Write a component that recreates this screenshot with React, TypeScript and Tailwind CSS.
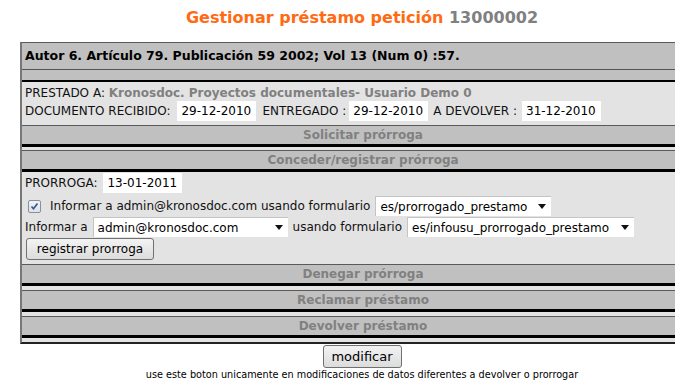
import React from "react";

const font = { fontFamily: '"DejaVu Sans", Verdana, sans-serif' };

function TextInput({ value }: { value: string }) {
  return (
    <div className="w-[79px] h-[20px] bg-white flex items-center pl-[4px] text-[12px] text-black">
      {value}
    </div>
  );
}

function Select({ value, width }: { value: string; width: string }) {
  return (
    <div
      className={`${width} h-[20px] bg-white border-t border-l border-[#c4c4c4] flex items-center justify-between pl-[4px] pr-[5px] text-[12px] text-black`}
    >
      <span>{value}</span>
      <svg width="8" height="5" viewBox="0 0 8 5">
        <path d="M0 0 L8 0 L4 5 Z" fill="#111" />
      </svg>
    </div>
  );
}

function Bar({ title }: { title: string }) {
  return (
    <div className="border-t border-[#5a5a5a] bg-[#c0c0c0] h-[22px] border-b-[3px] border-b-black flex items-center justify-center font-bold text-[12px] text-[#808080]">
      {title}
    </div>
  );
}

export default function App() {
  return (
    <div className="w-[675px] h-[389px] overflow-hidden bg-white" style={font}>
      <div className="w-[724px]">
        <div className="h-[42px] pt-[8px] text-center text-[16px] font-bold leading-[20px]">
          <span className="text-[#ff6a13]">Gestionar préstamo petición </span>
          <span className="text-[#808080]">13000002</span>
        </div>
        <div className="ml-[20px] w-[684px] border-t border-t-[#5a5a5a] border-l-2 border-l-[#777] border-b-2 border-b-[#222] bg-[#e3e3e3] text-[12px] text-[#111]">
          <div className="h-[27px] bg-[#c0c0c0] border-b border-b-[#555] flex items-center pl-[3px] font-bold text-black text-[12.5px]">
            Autor 6. Artículo 79. Publicación 59 2002; Vol 13 (Num 0) :57.
          </div>
          <div className="h-[12px] bg-[#c0c0c0] border-b-2 border-b-black" />
          <div className="pl-[3px] pt-[2px] pb-[4px]">
            <div className="h-[17px] flex items-center">
              <span>PRESTADO A:&nbsp;</span>
              <span className="font-bold text-[#808080]">Kronosdoc. Proyectos documentales- Usuario Demo 0</span>
            </div>
            <div className="h-[20px] flex items-center">
              <span>DOCUMENTO RECIBIDO:</span>
              <div className="ml-[7px]"><TextInput value="29-12-2010" /></div>
              <span className="ml-[6px]">ENTREGADO :</span>
              <div className="ml-[3px]"><TextInput value="29-12-2010" /></div>
              <span className="ml-[5px]">A DEVOLVER :</span>
              <div className="ml-[5px]"><TextInput value="31-12-2010" /></div>
            </div>
          </div>
          <div className="pb-[3px]">
            <Bar title="Solicitar prórroga" />
          </div>
          <Bar title="Conceder/registrar prórroga" />
          <div className="pl-[3px] pt-[1px] pb-[4px]">
            <div className="h-[20px] flex items-center">
              <span>PRORROGA:</span>
              <div className="ml-[6px]"><TextInput value="13-01-2011" /></div>
            </div>
            <div className="h-[20px] mt-[3px] flex items-center">
              <span className="ml-[3px] w-[13px] h-[13px] border border-[#8e8f8f] rounded-[2px] bg-gradient-to-b from-[#f0f4fa] to-[#d9e2ee] flex items-center justify-center">
                <svg width="9" height="9" viewBox="0 0 9 9">
                  <path d="M1.5 4.5 L3.5 6.8 L7.5 1.5" stroke="#3c4f8a" strokeWidth="1.6" fill="none" />
                </svg>
              </span>
              <span className="ml-[9px]">Informar a admin@kronosdoc.com usando formulario</span>
              <div className="ml-[5px]"><Select value="es/prorrogado_prestamo" width="w-[176px]" /></div>
            </div>
            <div className="h-[20px] mt-[1px] flex items-center">
              <span>Informar a</span>
              <div className="ml-[5px]"><Select value="admin@kronosdoc.com" width="w-[195px]" /></div>
              <span className="ml-[5px]">usando formulario</span>
              <div className="ml-[5px]"><Select value="es/infousu_prorrogado_prestamo" width="w-[227px]" /></div>
            </div>
            <div className="mt-[1px] ml-[1px] w-[128px] h-[22px] border border-[#707070] rounded-[3px] bg-gradient-to-b from-[#f3f3f3] to-[#dcdcdc] flex items-center justify-center text-[12px] text-black">
              registrar prorroga
            </div>
          </div>
          <div className="pb-[4px]"><Bar title="Denegar prórroga" /></div>
          <div className="pb-[4px]"><Bar title="Reclamar préstamo" /></div>
          <div className="pb-[4px]"><Bar title="Devolver préstamo" /></div>
        </div>
        <div className="flex justify-center mt-[1px]">
          <div className="w-[79px] h-[23px] border border-[#707070] rounded-[3px] bg-gradient-to-b from-[#f3f3f3] to-[#dcdcdc] flex items-center justify-center text-[13px] text-black">
            modificar
          </div>
        </div>
        <div className="text-center text-[9.7px] leading-[12px] mt-[1px] text-black">
          use este boton unicamente en modificaciones de datos diferentes a devolver o prorrogar
        </div>
      </div>
    </div>
  );
}
